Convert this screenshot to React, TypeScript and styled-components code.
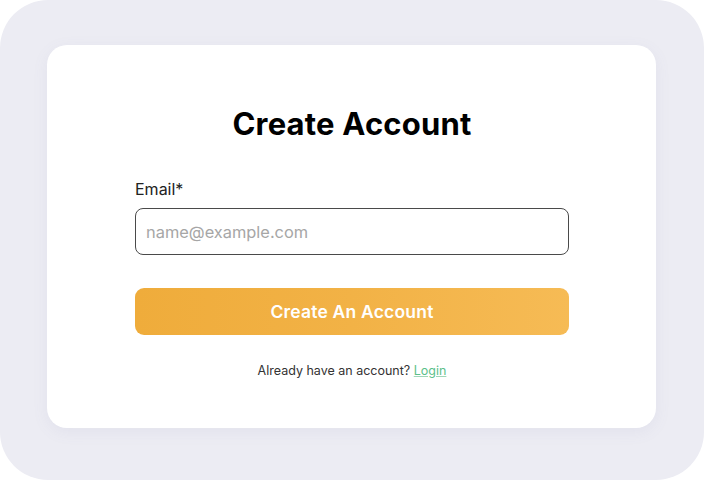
import React from "react";
import styled, { createGlobalStyle } from "styled-components";

const GlobalStyle = createGlobalStyle`
    html, body {
        margin: 0;
        padding: 0;
        background: #ffffff;
    }
    body {
        font-family: Inter, "Noto Sans", sans-serif;
    }
    * {
        box-sizing: border-box;
    }
`;

const Frame = styled.div`
    width: 704px;
    height: 480px;
    background: #ececf3;
    border-radius: 48px;
    padding: 45px 48px 52px 47px;
`;

const Card = styled.main`
    height: 100%;
    background: #ffffff;
    border-radius: 20px;
    box-shadow: 0 4px 16px rgba(120, 120, 160, 0.08);
    padding: 60px 87px 0 88px;
    display: flex;
    flex-direction: column;
`;

const Title = styled.h1`
    margin: 0 0 36px;
    text-align: center;
    font-size: 31px;
    line-height: 38px;
    font-weight: 700;
    color: #000000;
    letter-spacing: 0.2px;
`;

const Label = styled.label`
    display: block;
    font-size: 16px;
    line-height: 20px;
    color: #222222;
    margin-bottom: 9px;
`;

const Input = styled.input`
    display: block;
    width: 100%;
    height: 47px;
    border: 1px solid #4a4a4a;
    border-radius: 8px;
    padding: 0 10px;
    font-family: inherit;
    font-size: 16.4px;
    color: #222222;
    outline: none;

    &::placeholder {
        color: #a6a6a6;
    }
`;

const SubmitButton = styled.button`
    margin-top: 33px;
    width: 100%;
    height: 47px;
    border: none;
    border-radius: 9px;
    background: linear-gradient(90deg, #efac3b 0%, #f2b246 50%, #f6bb55 100%);
    color: #ffffff;
    font-family: inherit;
    font-size: 17.5px;
    font-weight: 600;
    letter-spacing: 0.2px;
    cursor: pointer;
`;

const Footer = styled.p`
    margin: 28px 0 0;
    text-align: center;
    font-size: 12.5px;
    color: #333333;
`;

const LoginLink = styled.a`
    color: #5cbf8a;
    text-decoration: underline;
    text-decoration-color: #9fd6b7;
`;

export default function App() {
    return (
        <>
            <GlobalStyle />
            <Frame>
                <Card>
                    <Title>Create Account</Title>
                    <Label htmlFor="email">Email*</Label>
                    <Input id="email" type="email" placeholder="name@example.com" />
                    <SubmitButton type="button">Create An Account</SubmitButton>
                    <Footer>
                        Already have an account? <LoginLink href="#">Login</LoginLink>
                    </Footer>
                </Card>
            </Frame>
        </>
    );
}
